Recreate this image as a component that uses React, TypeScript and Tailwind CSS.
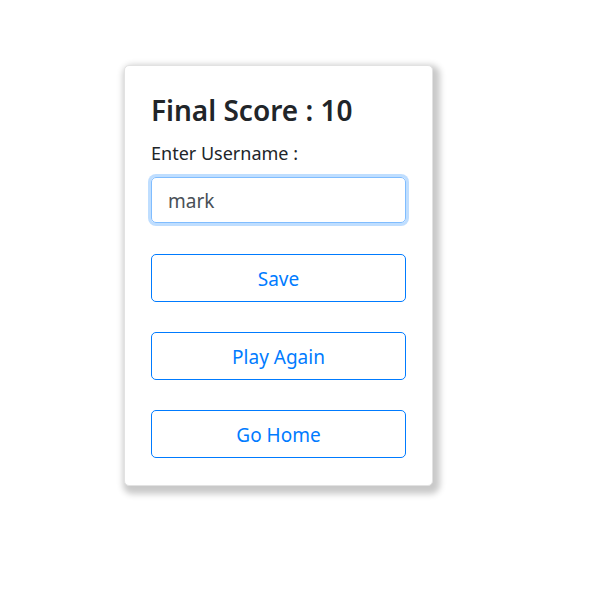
import { useState } from "react";

const App = () => {
  const [username, setUsername] = useState<string>("mark");
  const buttons = ["Save", "Play Again", "Go Home"];

  return (
    <div className="w-[590px] h-[590px] bg-white font-['Noto_Sans',sans-serif] text-[#212529]">
      <div className="pt-[65px] pl-[124px]">
        <div className="w-[309px] h-[421px] bg-white border border-[#e2e2e2] rounded-[5px] shadow-[3px_4px_6px_4px_#c9c9c9] px-[26px] pt-[28px]">
          <h2 className="text-[28px] font-semibold leading-[1.2] mb-[12px]">
            Final Score : 10
          </h2>
          <label className="block text-[18px] leading-[1.5] mb-[10px]">
            Enter Username :
          </label>
          <input
            value={username}
            onChange={(e) => setUsername(e.target.value)}
            className="block w-full h-[46px] px-[16px] pt-[3px] text-[19px] text-[#495057] border border-[#80bdff] rounded-[5px] shadow-[0_0_0_3px_rgba(0,123,255,0.25)] outline-none"
          />
          <div className="flex flex-col gap-[30px] mt-[31px]">
            {buttons.map((label, index) => (
              <button
                key={index}
                className="w-full h-[48px] pt-[3px] text-[19px] text-[#007bff] border border-[#007bff] rounded-[5px] bg-white"
              >
                {label}
              </button>
            ))}
          </div>
        </div>
      </div>
    </div>
  );
};

export default App;
